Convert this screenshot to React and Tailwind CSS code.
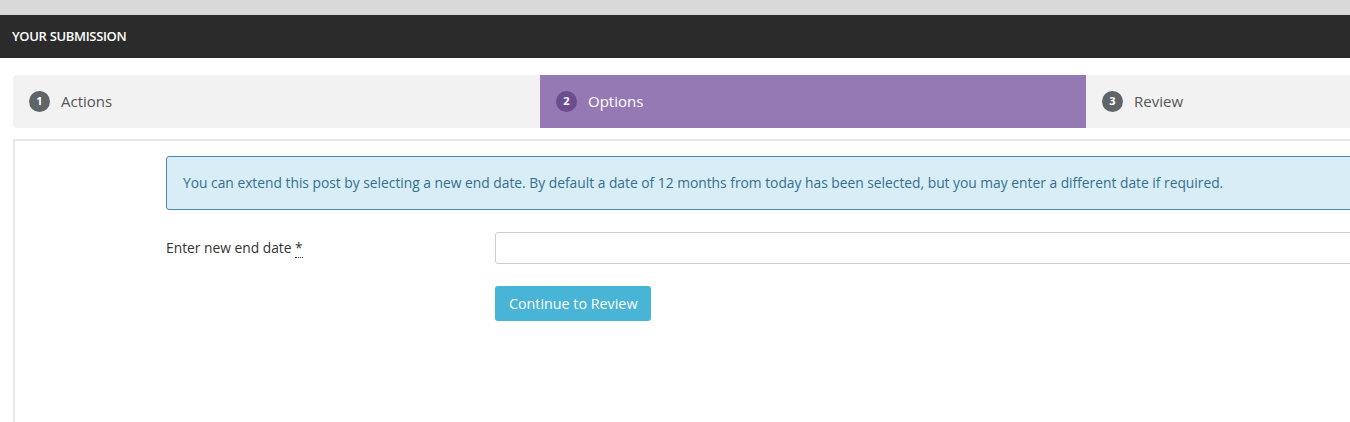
export default function App() {
  const font = { fontFamily: '"Open Sans", "Noto Sans", sans-serif' };
  return (
    <div className="w-[1350px] h-[422px] overflow-hidden bg-white" style={font}>
      <div className="h-[15px] bg-[#d9d9d9]" />
      <div className="h-[43px] bg-[#2b2b2b] flex items-center px-3">
        <span className="text-[13px] text-white font-semibold tracking-tight">YOUR SUBMISSION</span>
      </div>
      <div className="pl-[13px] pt-[17px]">
        {/* Steps */}
        <div className="flex h-[53px] w-[1700px]">
          <div className="w-[527px] bg-[#f2f2f2] flex items-center pl-4 gap-[11px] rounded-l-sm">
            <span className="w-[21px] h-[21px] rounded-full bg-[#5f6468] text-white text-[11px] font-bold flex items-center justify-center">1</span>
            <span className="text-[15px] text-[#555]">Actions</span>
          </div>
          <div className="w-[546px] bg-[#9579b5] flex items-center pl-4 gap-[11px]">
            <span className="w-[21px] h-[21px] rounded-full bg-[#6b4d8f] text-white text-[11px] font-bold flex items-center justify-center">2</span>
            <span className="text-[15px] text-white">Options</span>
          </div>
          <div className="flex-1 bg-[#f2f2f2] flex items-center pl-4 gap-[11px]">
            <span className="w-[21px] h-[21px] rounded-full bg-[#5f6468] text-white text-[11px] font-bold flex items-center justify-center">3</span>
            <span className="text-[15px] text-[#555]">Review</span>
          </div>
        </div>

        {/* Panel */}
        <div className="mt-[11px] border-t-2 border-l-2 border-[#e8e8e8] w-[1700px] h-[300px] pt-[15px] pl-[151px]">
          <div className="bg-[#d9edf7] border border-[#4a88ad] rounded-[3px] h-[54px] flex items-center pl-4">
            <p className="text-[13.8px] text-[#31708f]">
              You can extend this post by selecting a new end date. By default a date of 12 months from today has been selected, but you may enter a different date if required.
            </p>
          </div>
          <div className="flex items-center mt-[22px]">
            <label className="w-[329px] text-[13.8px] text-[#333]">
              Enter new end date{" "}
              <abbr className="no-underline border-b border-dotted border-[#333]">*</abbr>
            </label>
            <input className="flex-1 h-[32px] border border-[#ccc] rounded-[3px]" />
          </div>
          <div className="pl-[329px] mt-[22px]">
            <button className="h-[35px] px-[14px] bg-[#48b4d6] text-white text-[14.3px] rounded-[3px]">
              Continue to Review
            </button>
          </div>
        </div>
      </div>
    </div>
  );
}
